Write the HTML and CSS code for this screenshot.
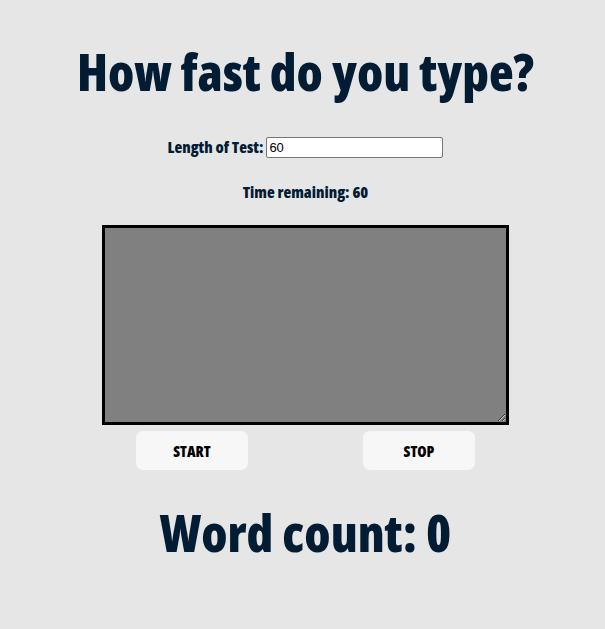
FILE: index.html
```html
<!DOCTYPE html>
<html>
<head>
<meta charset="utf-8">
<link rel="stylesheet" href="styles.css">
</head>
<body>
<main class="page">
  <h1 class="title">How fast do you type?</h1>
  <div class="length-row">
    <label class="label" for="len">Length of Test:</label>
    <input class="len-input" id="len" type="text" value="60">
  </div>
  <p class="time">Time remaining: 60</p>
  <textarea class="typing"></textarea>
  <div class="buttons">
    <button class="btn">START</button>
    <button class="btn">STOP</button>
  </div>
  <h2 class="count">Word count: 0</h2>
</main>
</body>
</html>
```
FILE: styles.css
```css
html, body {
  margin: 0;
  padding: 0;
  background: #e6e6e6;
}
.page {
  padding-left: 6px;
  display: flex;
  flex-direction: column;
  align-items: center;
  color: #011c33;
  font-family: "Open Sans", sans-serif;
  font-stretch: 75%;
  font-weight: 800;
}
.title {
  margin: 41px 0 0 0;
  font-size: 51px;
  line-height: 60px;
  font-weight: 800;
}
.length-row {
  margin-top: 35px;
  display: flex;
  align-items: center;
  gap: 3px;
}
.label {
  font-size: 16px;
}
.len-input {
  width: 171px;
  height: 17px;
  padding: 1px 2px;
  border: 1px solid #767676;
  border-radius: 2px;
  font-family: "Liberation Sans", Arial, sans-serif;
  font-stretch: normal;
  font-size: 13px;
  font-weight: normal;
  color: #000;
  background: #fff;
}
.time {
  margin: 24px 0 0 0;
  font-size: 16px;
  line-height: 20px;
}
.typing {
  margin-top: 23px;
  width: 401px;
  height: 194px;
  box-sizing: content-box;
  padding: 0;
  border: 3px solid #000;
  background: #808080;
  display: block;
}
.buttons {
  width: 407px;
  box-sizing: border-box;
  padding: 0 34px;
  margin-top: 6px;
  display: flex;
  justify-content: space-between;
}
.btn {
  width: 112px;
  height: 39px;
  border: none;
  border-radius: 7px;
  background: #f7f7f7;
  color: #000;
  font-family: "Open Sans", sans-serif;
  font-stretch: 75%;
  font-weight: 800;
  font-size: 15px;
}
.count {
  margin: 30px 0 0 0;
  font-size: 51px;
  line-height: 64px;
  font-weight: 800;
}
```
